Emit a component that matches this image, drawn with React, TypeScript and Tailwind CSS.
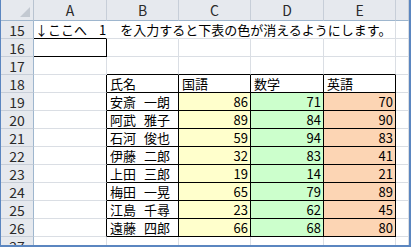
import React from "react";

const COLS = ["A", "B", "C", "D", "E", ""];
const ROWS = [15, 16, 17, 18, 19, 20, 21, 22, 23, 24, 25, 26, 27];

const HEAD = ["氏名", "国語", "数学", "英語"];
const DATA: [string, string, number, number, number][] = [
  ["安斎", "一朗", 86, 71, 70],
  ["阿武", "雅子", 89, 84, 90],
  ["石河", "俊也", 59, 94, 83],
  ["伊藤", "二郎", 32, 83, 41],
  ["上田", "三郎", 19, 14, 21],
  ["梅田", "一晃", 65, 79, 89],
  ["江島", "千尋", 23, 62, 45],
  ["遠藤", "四郎", 66, 68, 80],
];

const FILLS = ["bg-[#ffffcc]", "bg-[#ccffcc]", "bg-[#fcd5b4]"];

// cells that carry a thin black border: A16 and the score table B18:E26
const inBox = (r: number, c: number) => {
  if (r === 16 && c === 0) return true;
  return r >= 18 && r <= 26 && c >= 1 && c <= 4;
};

const Cell = ({ r, c }: { r: number; c: number }) => {
  const hideRight = r === 15 && c >= 0 && c <= 3; // text overflows over these lines
  const blackRight = inBox(r, c) || inBox(r, c + 1);
  const blackBottom = inBox(r, c) || inBox(r + 1, c);

  const right = hideRight
    ? "border-r border-r-transparent"
    : blackRight
      ? "border-r border-r-black"
      : "border-r border-r-[#dadee4]";
  const bottom = blackBottom ? "border-b border-b-black" : "border-b border-b-[#dadee4]";

  let fill = "";
  let content: React.ReactNode = null;
  let align = "justify-start pl-[2px]";

  if (r === 15 && c === 0) {
    content = (
      <span className="relative z-10 whitespace-nowrap">
        ↓ここへ<span className="inline-block w-[12px]" />1<span className="inline-block w-[14px]" />
        を入力すると下表の色が消えるようにします。
      </span>
    );
    align = "justify-start pl-[1px]";
  }
  if (r === 18 && c >= 1 && c <= 4) {
    content = HEAD[c - 1];
    align = "justify-start pl-[3px]";
  }
  if (r >= 19 && r <= 26 && c >= 1 && c <= 4) {
    const row = DATA[r - 19];
    if (c === 1) {
      content = (
        <>
          {row[0]}
          <span className="inline-block w-[8px]" />
          {row[1]}
        </>
      );
      align = "justify-start pl-[3px]";
    } else {
      content = row[c];
      fill = FILLS[c - 2];
      align = "justify-end pr-[2px]";
    }
  }

  return (
    <div className={`flex items-end overflow-visible ${right} ${bottom} ${fill} ${align}`}>
      <span className="whitespace-nowrap leading-[16px]">{content}</span>
    </div>
  );
};

export default function App() {
  return (
    <div className="h-[248px] w-[411px] bg-white font-['Noto_Sans_CJK_JP',sans-serif] text-[13px] text-black">
      <div className="h-[247px] overflow-hidden border-b-2 border-l border-r-2 border-[#5b86c0]">
        <div className="grid grid-cols-[33px_73px_72px_72px_73px_72px_1fr] grid-rows-[21px_repeat(13,18px)]">
          {/* corner */}
          <div className="relative border-b border-r border-b-[#9eb6ce] border-r-[#b8c3d0] bg-[#e6e9ee]">
            <svg className="absolute bottom-[3px] right-[3px]" width="10" height="10" viewBox="0 0 10 10">
              <polygon points="10,0 10,10 0,10" fill="#c3c9d1" />
            </svg>
          </div>
          {COLS.map((col, i) => (
            <div
              key={i}
              className="flex items-center justify-center border-b border-r border-b-[#9eb6ce] border-r-[#c7ced8] bg-[#e6e9ee] text-[14px] leading-[18px] text-[#2a2a2a]"
            >
              {col}
            </div>
          ))}

          {ROWS.map((r) => (
            <React.Fragment key={r}>
              <div className="flex items-center justify-center border-b border-r border-b-[#c7ced8] border-r-[#9eb6ce] bg-[#e6e9ee] text-[14px] leading-[16px] text-[#2a2a2a]">
                {r}
              </div>
              {COLS.map((_, c) => (
                <Cell key={c} r={r} c={c} />
              ))}
            </React.Fragment>
          ))}
        </div>
      </div>
    </div>
  );
}
